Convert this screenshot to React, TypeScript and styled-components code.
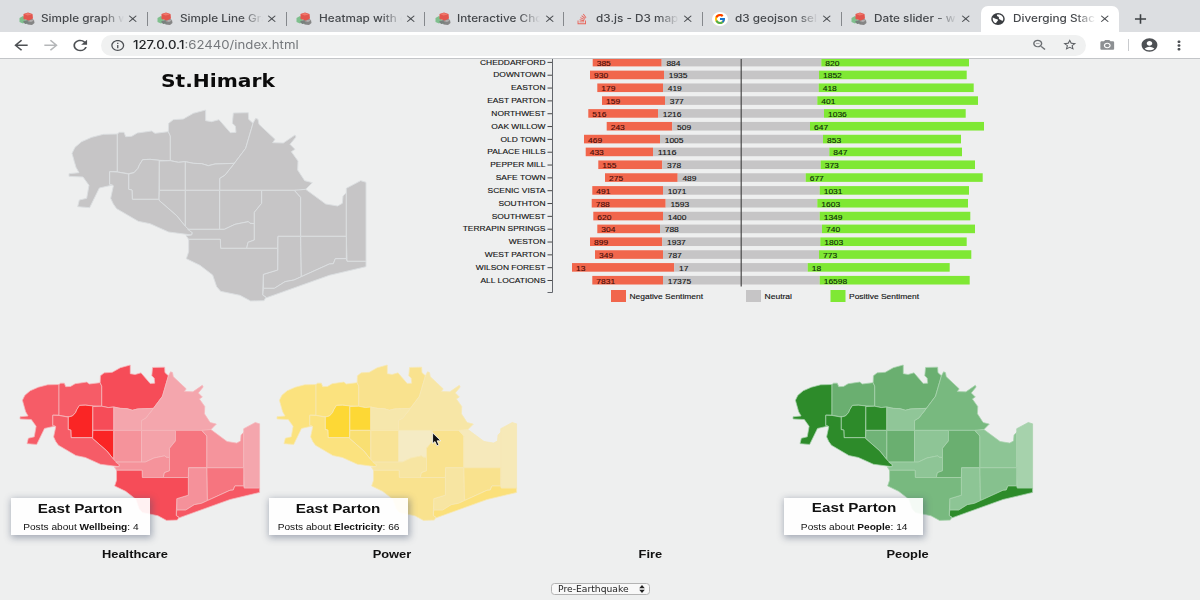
import React from "react";
import styled, { createGlobalStyle } from "styled-components";
import {
  MdArrowBack,
  MdArrowForward,
  MdRefresh,
  MdInfoOutline,
  MdZoomOut,
  MdStarBorder,
  MdCameraAlt,
  MdAccountCircle,
  MdMoreVert,
  MdClose,
  MdAdd,
} from "react-icons/md";
import { FaStackOverflow } from "react-icons/fa";
import { FcGoogle } from "react-icons/fc";

const Global = createGlobalStyle`
  * { box-sizing: border-box; }
  html, body { margin: 0; padding: 0; }
  body { width: 1200px; height: 600px; overflow: hidden; background: #eeefef; }
`;

const Window = styled.div`
  width: 1200px;
  height: 600px;
  display: flex;
  flex-direction: column;
  overflow: hidden;
  background: #eeefef;
  color: #111;
  font-family: "Liberation Sans", Arial, sans-serif;
`;

const Wide = styled.span<{ $k: number; $origin?: string }>`
  display: inline-block;
  white-space: nowrap;
  transform: scaleX(${(p) => p.$k});
  transform-origin: ${(p) => p.$origin ?? "center"};
`;

/* ---------- browser chrome ---------- */

const TabStrip = styled.div`
  height: 32px;
  flex: none;
  background: #dcdee1;
  padding: 6px 0 0 9px;
  display: flex;
`;

const TabBox = styled.div<{ $active?: boolean; $divider: boolean }>`
  position: relative;
  width: 138.8px;
  height: 26px;
  flex: none;
  display: flex;
  align-items: center;
  padding-left: 9px;
  border-radius: 7px 7px 0 0;
  background: ${(p) => (p.$active ? "#fff" : "transparent")};
  &::after {
    content: "";
    display: ${(p) => (p.$divider ? "block" : "none")};
    position: absolute;
    right: 0;
    top: 6px;
    width: 1px;
    height: 14px;
    background: #85888c;
  }
`;

const Favicon = styled.span`
  width: 17px;
  height: 14px;
  display: flex;
  align-items: center;
  justify-content: center;
  flex: none;
`;

const GoogleDisc = styled.span`
  width: 16px;
  height: 14px;
  border-radius: 50%;
  background: #fff;
  display: flex;
  align-items: center;
  justify-content: center;
`;

const TabTitle = styled.span`
  width: 84px;
  margin-left: 6px;
  font: 500 10.5px/14px Inter, sans-serif;
  color: #45484c;
  mask-image: linear-gradient(to right, #000 62px, transparent 83px);
`;

const TabClose = styled.span`
  display: flex;
  margin-left: 1.3px;
  color: #4a4d51;
`;

const NewTab = styled.span`
  display: flex;
  align-items: center;
  margin-left: 11.5px;
  color: #3c4043;
`;

const Toolbar = styled.div`
  height: 27px;
  flex: none;
  display: flex;
  align-items: center;
  padding: 0 5px 0 5.5px;
  background: #fff;
  border-bottom: 1px solid #c3c5c8;
`;

const Slot = styled.span<{ $c?: string; $w?: number }>`
  width: ${(p) => p.$w ?? 30}px;
  flex: none;
  display: flex;
  align-items: center;
  justify-content: center;
  color: ${(p) => p.$c ?? "#4d5054"};
`;

const Omnibox = styled.div`
  height: 21px;
  width: 985px;
  margin: 0 6px 0 5.5px;
  border-radius: 11px;
  background: #f0f1f1;
  display: flex;
  align-items: center;
  padding: 0 1.5px 0 8px;
`;

const Url = styled.div`
  flex: 1;
  padding-left: 6px;
  font: 400 11.5px/16px Inter, sans-serif;
  color: #75787c;
  b {
    font-weight: 500;
    color: #222427;
  }
`;

const Divider = styled.span`
  width: 1px;
  height: 12px;
  margin: 0 5px 0 6px;
  background: #c9cbce;
`;

const BlockIcon = () => (
  <svg width="16" height="14" viewBox="0 0 32 28">
    <path d="M1 12 L8 8 L13 12 L13 20 L8 23 L1 20Z" fill="#7fbf8d" />
    <path d="M15 17 L22 12 L30 16 L31 22 L26 26 L17 25Z" fill="#858585" />
    <path d="M17 18 L24 15 L30 17 L24 20Z" fill="#b0aeae" />
    <path d="M9 4 L18 1 L27 4 L28 13 L20 17 L9 14Z" fill="#e2564e" />
    <path d="M10 4 L18 2 L26 5 L17 7Z" fill="#f0776b" />
    <path d="M8 19 L15 16 L20 23 L12 24Z" fill="#77817c" />
  </svg>
);

const GlobeIcon = () => (
  <svg width="14" height="12" viewBox="0 0 28 24" preserveAspectRatio="none">
    <ellipse cx="14" cy="12" rx="13.5" ry="11.8" fill="#3a3d41" />
    <path
      d="M3.5 9 C7 10 9 12 12.5 12.5 C15 13 14 16 12 17 C11 19 10 20 8 20 C4.500 18 3 14 3.500 9Z"
      fill="#fff"
    />
    <path
      d="M12 3.500 C15 2.500 20 3.500 23 7 C25 10 25 13 23.500 15.500 C21 16 20 13.500 17 12.500 C14.500 11 17 9 15 7.500 C13 7 11 5.500 12 3.500Z"
      fill="#fff"
    />
  </svg>
);

type Kind = "block" | "stack" | "google" | "globe";
const tabs: { title: string; kind: Kind; k: number }[] = [
  { title: "Simple graph w", kind: "block", k: 1.12 },
  { title: "Simple Line Gra", kind: "block", k: 1.12 },
  { title: "Heatmap with c", kind: "block", k: 1.12 },
  { title: "Interactive Cho", kind: "block", k: 1.12 },
  { title: "d3.js - D3 map", kind: "stack", k: 1.12 },
  { title: "d3 geojson sel", kind: "google", k: 1.12 },
  { title: "Date slider - w", kind: "block", k: 1.12 },
  { title: "Diverging Stac", kind: "globe", k: 1.12 },
];

const TabIcon = ({ kind }: { kind: Kind }) => {
  if (kind === "stack") return <FaStackOverflow size={12} color="#e8645a" />;
  if (kind === "google")
    return (
      <GoogleDisc>
        <FcGoogle size={12} />
      </GoogleDisc>
    );
  if (kind === "globe") return <GlobeIcon />;
  return <BlockIcon />;
};

const Glyph = styled.span<{ $w: number; $h: number }>`
  display: flex;
  svg {
    width: ${(p) => p.$w}px;
    height: ${(p) => p.$h}px;
  }
`;

const Chrome = () => (
  <>
    <TabStrip>
      {tabs.map((t, i) => (
        <TabBox key={t.title} $active={i === 7} $divider={i < 6}>
          <Favicon>
            <TabIcon kind={t.kind} />
          </Favicon>
          <TabTitle>
            <Wide $k={t.k} $origin="left">
              {t.title}
            </Wide>
          </TabTitle>
          <TabClose>
            <Glyph $w={13.5} $h={11.5}>
              <MdClose preserveAspectRatio="none" />
            </Glyph>
          </TabClose>
        </TabBox>
      ))}
      <NewTab>
        <Glyph $w={19} $h={16}>
          <MdAdd preserveAspectRatio="none" />
        </Glyph>
      </NewTab>
    </TabStrip>
    <Toolbar>
      <Slot>
        <Glyph $w={20} $h={16.5}>
          <MdArrowBack preserveAspectRatio="none" />
        </Glyph>
      </Slot>
      <Slot $c="#b5b7b9">
        <Glyph $w={20} $h={16.5}>
          <MdArrowForward preserveAspectRatio="none" />
        </Glyph>
      </Slot>
      <Slot>
        <Glyph $w={20.5} $h={17}>
          <MdRefresh preserveAspectRatio="none" />
        </Glyph>
      </Slot>
      <Omnibox>
        <Slot $w={18}>
          <Glyph $w={15.5} $h={13}>
            <MdInfoOutline preserveAspectRatio="none" />
          </Glyph>
        </Slot>
        <Url>
          <Wide $k={1.147} $origin="left">
            <b>127.0.0.1</b>:62440/index.html
          </Wide>
        </Url>
        <Slot $c="#6c6f73">
          <Glyph $w={17} $h={14}>
            <MdZoomOut preserveAspectRatio="none" />
          </Glyph>
        </Slot>
        <Slot $c="#5a5d61">
          <Glyph $w={15.5} $h={13.5}>
            <MdStarBorder preserveAspectRatio="none" />
          </Glyph>
        </Slot>
      </Omnibox>
      <Slot $c="#8d9093">
        <Glyph $w={16.5} $h={13}>
          <MdCameraAlt preserveAspectRatio="none" />
        </Glyph>
      </Slot>
      <Divider />
      <Slot>
        <Glyph $w={19} $h={16}>
          <MdAccountCircle preserveAspectRatio="none" />
        </Glyph>
      </Slot>
      <Slot>
        <Glyph $w={18} $h={15}>
          <MdMoreVert preserveAspectRatio="none" />
        </Glyph>
      </Slot>
    </Toolbar>
  </>
);

/* ---------- map ---------- */

const regions: string[] = [
  "202,222 160,223 125,232 95,245 75,262 66,280 73,305 78,322 87,338 57,341 57,349 99,351 117,376 110,415 88,420 83,440 119,443 148,384 188,375 179,373 179,335 202,335",
  "202,222 208,217 222,217 227,230 245,229 262,219 305,213 315,220 355,215 361,228 361,302 328,301 300,298 278,299 268,315 264,325 252,338 235,341 202,336",
  "355,215 356,190 370,179 400,177 430,160 467,150 467,182 485,185 507,179 541,218 558,217 556,198 547,190 550,159 595,158 596,178 609,190 587,265 553,310 495,312 475,317 455,311 430,310 405,305 385,307 361,302 361,228",
  "609,190 617,175 624,178 627,193 675,238 668,248 700,249 735,225 738,231 720,253 735,268 724,275 744,303 743,330 764,362 787,368 767,388 745,391 509,391 509,355 525,345 553,310 587,265",
  "278,299 300,298 328,301 327,418 247,418 246,390 236,388 236,342 252,338 264,325 268,315",
  "328,303 361,302 385,307 406,305 406,391 328,391",
  "406,305 430,310 455,311 475,317 495,312 553,310 525,345 509,355 509,391 406,391",
  "328,391 406,391 406,499 380,467 327,421",
  "406,391 509,391 509,508 413,508 406,499",
  "509,391 635,391 635,430 613,457 613,491 600,490 595,485 555,493 523,508 509,508",
  "179,335 202,336 236,342 236,388 246,390 247,418 327,418 327,421 380,467 406,499 427,518 425,525 356,516 300,491 265,484 200,446 190,432 182,415 190,378 188,375 179,373",
  "413,508 523,508 555,493 595,485 600,490 613,491 613,540 594,547 590,565 512,565 511,538 416,538 408,527 425,525 427,518",
  "635,391 733,391 752,412 752,529 684,529 683,565 590,565 594,547 613,540 613,457 635,430",
  "733,391 767,388 827,432 863,438 877,430 879,408 889,398 889,529 752,529 752,412",
  "889,385 932,362 948,367 948,604 891,604 889,529",
  "684,529 752,529 754,650 732,660 705,665 673,685 640,685 640,643 683,630",
  "752,529 889,529 889,596 856,596 850,611 838,612 754,650",
  "640,685 673,685 705,665 732,660 754,650 838,612 850,611 856,596 889,596 891,604 948,604 948,620 838,646 650,713 638,705",
  "416,538 511,538 512,565 683,565 683,630 640,643 638,705 648,712 642,722 602,723 570,706 512,694 500,680 488,645 450,616 409,596 416,575",
];

const RegionMap = ({
  w,
  h,
  fills,
  line,
}: {
  w: number;
  h: number;
  fills: string[];
  line: string;
}) => (
  <svg
    width={w}
    height={h}
    viewBox="57 150 891 573"
    preserveAspectRatio="none"
    overflow="visible"
    display="block"
  >
    {regions.map((pts, i) => (
      <polygon
        key={i}
        points={pts}
        fill={fills[i % fills.length]}
        stroke={line}
        strokeWidth={2.8}
        strokeLinejoin="round"
      />
    ))}
  </svg>
);

const red = ["#f65c67", "#f65c67", "#f64c58", "#f4a6ad", "#fa2525", "#f64c58", "#f4a6ad", "#fa2525", "#f5939b", "#f4a2a9", "#f65c67", "#f5939b", "#f6757f", "#f5949c", "#f4a6ad", "#f5919a", "#f6757f", "#f65864", "#f64c58"];
const yellow = ["#fbe27e", "#fbe27e", "#f9e28e", "#f7e6a6", "#fdd835", "#fdd835", "#f6e7ac", "#f9df72", "#f8e396", "#f5ebc4", "#fbe27e", "#f7e5a2", "#f9e28e", "#f6e9bb", "#f6e9b8", "#f7e5a2", "#f9e28e", "#fbe07a", "#f9e28e"];
const green = ["#2d8b2a", "#6aaf70", "#6aaf70", "#78b97f", "#2d8b2a", "#2d8b2a", "#90c698", "#70b377", "#6aaf70", "#8ec596", "#2d8b2a", "#8ec596", "#6aaf70", "#8dc595", "#a6d2ac", "#8dc595", "#86c18e", "#2d8b2a", "#78b97f"];

/* ---------- chart ---------- */

type Row = [string, number, number, number, number, number, number, number];
// label, negative / neutral / positive counts, then the four bar edges
const rows: Row[] = [
  ["CHEDDARFORD", 385, 884, 820, 592.7, 661.7, 821.3, 969],
  ["DOWNTOWN", 930, 1935, 1852, 590, 664, 819, 966.7],
  ["EASTON", 179, 419, 418, 597.3, 663, 818.7, 973.7],
  ["EAST PARTON", 159, 377, 401, 602, 665, 817.3, 978],
  ["NORTHWEST", 516, 1216, 1036, 588.3, 658, 824, 965.7],
  ["OAK WILLOW", 243, 509, 647, 606.7, 672.3, 810, 984],
  ["OLD TOWN", 469, 1005, 853, 584, 660, 823, 961],
  ["PALACE HILLS", 433, 1116, 847, 585.7, 653, 829.3, 962],
  ["PEPPER MILL", 155, 378, 373, 598.3, 662.3, 820.7, 975],
  ["SAFE TOWN", 275, 489, 677, 605, 677.7, 805.7, 982.7],
  ["SCENIC VISTA", 491, 1071, 1031, 592.3, 663, 819.7, 969],
  ["SOUTHTON", 788, 1593, 1603, 591.7, 665.7, 817.3, 968],
  ["SOUTHWEST", 620, 1400, 1349, 593.3, 663, 819.7, 970.3],
  ["TERRAPIN SPRINGS", 304, 788, 740, 597.3, 660, 822, 975],
  ["WESTON", 899, 1937, 1803, 590, 662.3, 820.3, 966.7],
  ["WEST PARTON", 349, 787, 773, 595, 663, 819, 971.3],
  ["WILSON FOREST", 13, 17, 18, 572, 674.3, 807.7, 949.7],
  ["ALL LOCATIONS", 7831, 17375, 16598, 592.3, 663, 819.7, 969.7],
];

const ChartText = styled.text<{ $size: number; $tone?: string }>`
  font-family: "Liberation Sans", Arial, sans-serif;
  font-size: ${(p) => p.$size}px;
  fill: ${(p) => p.$tone ?? "#111"};
  stroke: ${(p) => p.$tone ?? "#111"};
  stroke-width: 0.12px;
`;

const legend: [number, string, string, number][] = [
  [611, "#f1664c", "Negative Sentiment", 73.5],
  [746, "#c6c5c6", "Neutral", 27.5],
  [830.5, "#7fe834", "Positive Sentiment", 70],
];

const SentimentChart = () => (
  <svg width="570" height="251" viewBox="440 59 570 251" display="block">
    {rows.map((r, i) => {
      const y = 57.8 + i * 12.83;
      const v = (x: number, n: number, tone: string) => (
        <ChartText
          $size={7.3}
          $tone={tone}
          x={x}
          y={y + 7.8}
          textLength={String(n).length * 4.7}
          lengthAdjust="spacingAndGlyphs"
        >
          {n}
        </ChartText>
      );
      return (
        <g key={r[0]}>
          <rect x={r[4]} y={y} width={r[5] - r[4]} height={8.6} fill="#f1664c" />
          <rect x={r[5]} y={y} width={r[6] - r[5]} height={8.6} fill="#c6c5c6" />
          <rect x={r[6]} y={y} width={r[7] - r[6]} height={8.6} fill="#7fe834" />
          {v(r[4] + 4, r[1], "#4a0d08")}
          {v(r[5] + 4.7, r[2], "#151515")}
          {v(r[6] + 4, r[3], "#0c2c08")}
          <ChartText $size={7.6} textAnchor="end" transform={`translate(545.5 ${y + 6.8}) scale(1.11 1)`}>
            {r[0]}
          </ChartText>
          <line x1="547.5" x2="552.5" y1={y + 4.6} y2={y + 4.6} stroke="#333" strokeWidth="0.9" />
        </g>
      );
    })}
    <path d="M552.5 59 V292.5 H547.5" fill="none" stroke="#63666c" strokeWidth="1" />
    <line x1="741.2" x2="741.2" y1="59" y2="286.5" stroke="#4a4a4a" strokeWidth="1.2" />
    {legend.map(([x, c, t, w]) => (
      <g key={t}>
        <rect x={x} y="290" width="15" height="12" fill={c} />
        <ChartText $size={7.4} x={x + 18.5} y="298.7" textLength={w} lengthAdjust="spacingAndGlyphs">
          {t}
        </ChartText>
      </g>
    ))}
  </svg>
);

/* ---------- page ---------- */

const TopRow = styled.div`
  display: flex;
  height: 305px;
  flex: none;
`;

const MapPane = styled.div`
  width: 440px;
  padding-left: 69px;
`;

const MapTitle = styled.h1`
  width: 297px;
  height: 24px;
  margin: 10px 0 17px;
  text-align: center;
  font: 700 17px/24px "DejaVu Sans", sans-serif;
  color: #0b0b0b;
`;

const Panels = styled.div`
  display: flex;
  height: 206px;
  flex: none;
  padding: 0.7px 0 0 5.5px;
`;

const Panel = styled.section`
  position: relative;
  width: 257.8px;
  height: 205px;
  flex: none;
  display: flex;
  flex-direction: column;
  justify-content: space-between;
  padding-left: 14.2px;
`;

const Caption = styled.h2`
  width: 229.6px;
  margin: 0 0 8.7px;
  text-align: center;
  font-size: 11.3px;
  line-height: 14px;
  font-weight: 700;
`;

const Tip = styled.div`
  position: absolute;
  left: 5.5px;
  top: 133.5px;
  width: 139px;
  height: 37px;
  background: rgba(255, 255, 255, 0.92);
  box-shadow: 1px 2px 7px 1px rgba(70, 85, 110, 0.45);
  display: flex;
  flex-direction: column;
  align-items: center;
`;

const TipTitle = styled.div<{ $up?: boolean }>`
  font-weight: 700;
  font-size: 13px;
  line-height: 15px;
  margin: ${(p) => (p.$up ? "1.5px 0 6.3px" : "3px 0 4.8px")};
`;

const TipText = styled.div`
  font-size: 8.6px;
  line-height: 12px;
`;

const Footer = styled.div`
  display: flex;
  justify-content: center;
  padding-top: 13px;
`;

const Picker = styled.button`
  width: 99px;
  height: 12px;
  padding: 0 4px 0 6px;
  border: 1px solid #b3b3b3;
  border-radius: 3.5px;
  background: #f8f8f8;
  display: flex;
  align-items: center;
  justify-content: space-between;
  font: 400 8.4px/10px "DejaVu Sans", sans-serif;
  color: #222;
`;

const Cursor = styled.svg`
  position: absolute;
  left: 168.6px;
  top: 67.5px;
`;

interface PanelInfo {
  name: string;
  topic?: string;
  count?: number;
  fills?: string[];
  line?: string;
}

const panels: PanelInfo[] = [
  { name: "Healthcare", topic: "Wellbeing", count: 4, fills: red, line: "#f6b9bd" },
  { name: "Power", topic: "Electricity", count: 66, fills: yellow, line: "#f7e9b4" },
  { name: "Fire" },
  { name: "People", topic: "People", count: 14, fills: green, line: "#a9d3ae" },
];

const App = () => (
  <>
    <Global />
    <Window>
      <Chrome />
      <TopRow>
        <MapPane>
          <MapTitle>
            <Wide $k={1.19}>St.Himark</Wide>
          </MapTitle>
          <RegionMap w={297} h={191} fills={["#c6c5c6"]} line="#dcdfe1" />
        </MapPane>
        <SentimentChart />
      </TopRow>
      <Panels>
        {panels.map((p) => (
          <Panel key={p.name}>
            {p.fills ? <RegionMap w={239.6} h={155.4} fills={p.fills} line={p.line!} /> : <span />}
            {p.topic && (
              <Tip>
                <TipTitle $up={p.name === "People"}>
                  <Wide $k={1.17}>East Parton</Wide>
                </TipTitle>
                <TipText>
                  <Wide $k={1.18}>
                    Posts about <b>{p.topic}</b>: {p.count}
                  </Wide>
                </TipText>
              </Tip>
            )}
            {p.name === "Power" && (
              <Cursor width="10" height="15" viewBox="0 0 10 15">
                <path
                  d="M0.6 0.8 V11.6 L3 9.5 L4.9 13.8 L6.9 12.9 L5.1 8.8 H8.8Z"
                  fill="#111"
                  stroke="#fff"
                  strokeWidth="0.8"
                />
              </Cursor>
            )}
            <Caption>
              <Wide $k={1.14}>{p.name}</Wide>
            </Caption>
          </Panel>
        ))}
      </Panels>
      <Footer>
        <Picker>
          <Wide $k={1.1} $origin="left">
            Pre-Earthquake
          </Wide>
          <svg width="6" height="8" viewBox="0 0 6 8">
            <path d="M3 0 L5.8 3.2 H0.2Z M3 8 L5.8 4.8 H0.2Z" fill="#222" />
          </svg>
        </Picker>
      </Footer>
    </Window>
  </>
);

export default App;
